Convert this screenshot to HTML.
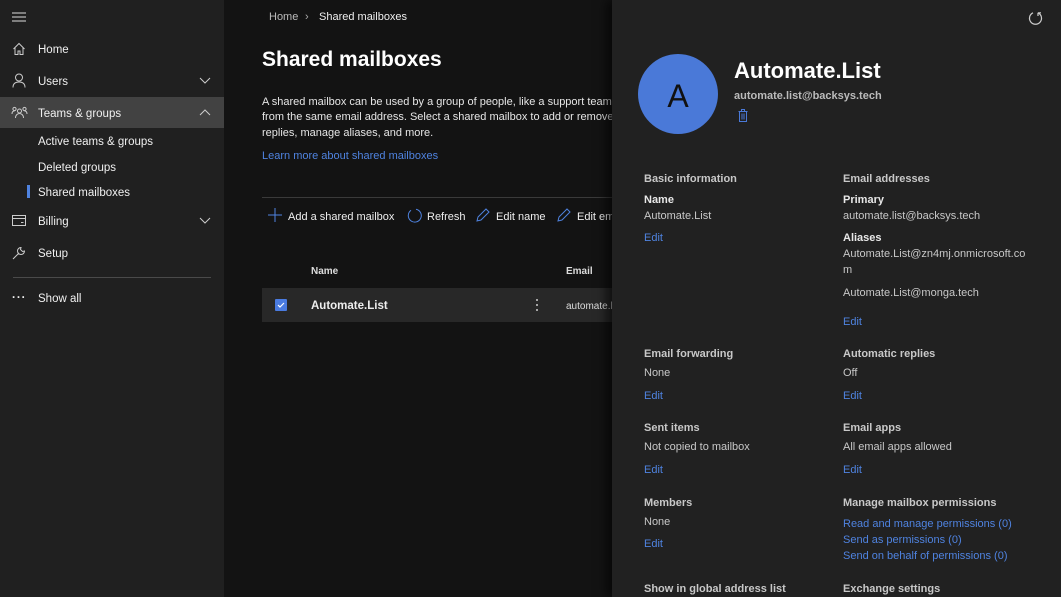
<!DOCTYPE html>
<html><head><meta charset="utf-8"><style>
*{margin:0;padding:0;box-sizing:border-box}
body{width:1061px;height:597px;overflow:hidden;background:#131313;font-family:"Segoe UI","Liberation Sans",sans-serif;color:#e6e6e6;font-size:11px;position:relative}
.a{position:absolute;white-space:nowrap;line-height:16px;margin-top:1px}
#side{position:absolute;left:0;top:0;width:224px;height:597px;background:#202020}
#panel{position:absolute;left:612px;top:0;width:449px;height:597px;background:#212121;box-shadow:-6px 0 10px rgba(0,0,0,.6)}
.nav{font-size:11.5px;color:#f0f0f0}
.h{font-weight:bold;color:#c8c8c8;font-size:11px}
.l{font-weight:bold;color:#e8e8e8;font-size:11px}
.v{color:#c8c8c8;font-size:11px}
.e{color:#4f83e0;font-size:11px}
svg{position:absolute}
</style></head><body>
<div id="side">
<svg style="left:12px;top:12px" width="14" height="10" viewBox="0 0 14 10"><path d="M0 1h14M0 5h14M0 9h14" stroke="#ddd" stroke-width="1"/></svg>
<svg style="left:12px;top:42px" width="14" height="14" viewBox="0 0 14 14" fill="none" stroke="#ccc" stroke-width="1"><path d="M1.5 7L7 1.5L12.5 7M3 5.5V12.5H6V9H8V12.5H11V5.5"/></svg>
<div class="a nav" style="left:38px;top:41px">Home</div>
<svg style="left:12px;top:73px" width="14" height="15" viewBox="0 0 14 15" fill="none" stroke="#ccc" stroke-width="1"><circle cx="7" cy="4.5" r="3.5"/><path d="M1 14.5C1 10.5 3.5 9 7 9S13 10.5 13 14.5"/></svg>
<div class="a nav" style="left:38px;top:73px">Users</div>
<svg style="left:199px;top:77px" width="12" height="7" viewBox="0 0 12 7" fill="none" stroke="#ccc"><path d="M1 1l5 5 5-5"/></svg>
<div style="position:absolute;left:0;top:97px;width:224px;height:31px;background:#424242"></div>
<svg style="left:11px;top:106px" width="17" height="13" viewBox="0 0 17 13" fill="none" stroke="#ccc" stroke-width="1"><circle cx="3.5" cy="3" r="1.6"/><circle cx="13.5" cy="3" r="1.6"/><circle cx="8.5" cy="5" r="2"/><path d="M1 8c0-2 1-3 2.5-3M16 8c0-2-1-3-2.5-3M4.5 12c0-3 2-4.5 4-4.5s4 1.5 4 4.5"/></svg>
<div class="a nav" style="left:38px;top:105px">Teams &amp; groups</div>
<svg style="left:199px;top:109px" width="12" height="7" viewBox="0 0 12 7" fill="none" stroke="#ccc"><path d="M1 6l5-5 5 5"/></svg>
<div class="a nav" style="left:38px;top:133px">Active teams &amp; groups</div>
<div class="a nav" style="left:38px;top:159px">Deleted groups</div>
<div style="position:absolute;left:27px;top:185px;width:3px;height:13px;background:#4f83e0"></div>
<div class="a nav" style="left:38px;top:184px">Shared mailboxes</div>
<svg style="left:12px;top:215px" width="14" height="11" viewBox="0 0 14 11" fill="none" stroke="#ccc"><rect x=".5" y=".5" width="13" height="10"/><path d="M.5 3.5h13M9 7.5h2.5"/></svg>
<div class="a nav" style="left:38px;top:213px">Billing</div>
<svg style="left:199px;top:217px" width="12" height="7" viewBox="0 0 12 7" fill="none" stroke="#ccc"><path d="M1 1l5 5 5-5"/></svg>
<svg style="left:12px;top:246px" width="14" height="14" viewBox="0 0 14 14" fill="none" stroke="#ccc"><path d="M1 13l6-6M9 1.5a3.5 3.5 0 1 0 3.5 3.5L10.5 5.5 8.5 3.5z"/></svg>
<div class="a nav" style="left:38px;top:245px">Setup</div>
<div style="position:absolute;left:13px;top:277px;width:198px;height:1px;background:#4a4a4a"></div>
<div class="a nav" style="left:12px;top:289px;letter-spacing:1px;font-weight:bold">···</div>
<div class="a nav" style="left:38px;top:290px">Show all</div>
</div>

<div class="a" style="left:269px;top:8px;color:#bbb">Home</div>
<div class="a" style="left:305px;top:8px;color:#aaa">›</div>
<div class="a" style="left:319px;top:8px;color:#eee">Shared mailboxes</div>
<div class="a" style="left:262px;top:45px;font-size:21px;font-weight:bold;color:#fff;line-height:28px">Shared mailboxes</div>
<div class="a" style="left:262px;top:94px;color:#e6e6e6;line-height:15.3px;white-space:normal;width:360px">A shared mailbox can be used by a group of people, like a support team, from the same email address. Select a shared mailbox to add or remove replies, manage aliases, and more.</div>
<div class="a e" style="left:262px;top:147px">Learn more about shared mailboxes</div>
<div style="position:absolute;left:262px;top:197px;width:350px;height:1px;background:#3a3a3a"></div>
<svg style="left:268px;top:208px" width="14" height="14" viewBox="0 0 14 14" stroke="#4f83e0"><path d="M7 0v14M0 7h14"/></svg>
<div class="a" style="left:288px;top:208px;color:#eee">Add a shared mailbox</div>
<svg style="left:407px;top:208px" width="15" height="15" viewBox="0 0 15 15" fill="none" stroke="#4f83e0"><path d="M9 1.2A6.5 6.5 0 1 1 4 2.3"/></svg>
<div class="a" style="left:427px;top:208px;color:#eee">Refresh</div>
<svg style="left:476px;top:208px" width="14" height="14" viewBox="0 0 14 14" fill="none" stroke="#4f83e0"><path d="M1 13l1-4 8-8 3 3-8 8z"/></svg>
<div class="a" style="left:496px;top:208px;color:#eee">Edit name</div>
<svg style="left:557px;top:208px" width="14" height="14" viewBox="0 0 14 14" fill="none" stroke="#4f83e0"><path d="M1 13l1-4 8-8 3 3-8 8z"/></svg>
<div class="a" style="left:577px;top:208px;color:#eee">Edit em</div>
<div class="a" style="left:311px;top:263px;font-size:10px;color:#ddd;font-weight:bold">Name</div>
<div class="a" style="left:566px;top:263px;font-size:10px;color:#ddd;font-weight:bold">Email</div>
<div style="position:absolute;left:262px;top:288px;width:350px;height:34px;background:#282828"></div>
<div style="position:absolute;left:275px;top:299px;width:12px;height:12px;background:#4a7be0;border-radius:1px"></div>
<svg style="left:277px;top:301px" width="8" height="8" viewBox="0 0 8 8" fill="none" stroke="#fff" stroke-width="1.2"><path d="M1 4l2 2 4-4"/></svg>
<div class="a" style="left:311px;top:297px;font-size:11.5px;color:#eee;font-weight:bold">Automate.List</div>
<svg style="left:535px;top:298px" width="4" height="14" viewBox="0 0 4 14" fill="#ccc"><circle cx="2" cy="2" r="1"/><circle cx="2" cy="7" r="1"/><circle cx="2" cy="12" r="1"/></svg>
<div class="a" style="left:566px;top:298px;font-size:10px;color:#ddd">automate.l</div>

<div id="panel">
<svg style="left:416px;top:11px" width="15" height="15" viewBox="0 0 15 15" fill="none" stroke="#ccc" stroke-width="1.2"><path d="M10 1.8A6 6 0 1 1 5 1.8M10 1.8V5M10 1.8H13"/></svg>
<div style="position:absolute;left:26px;top:54px;width:80px;height:80px;border-radius:50%;background:#4a79d8"></div>
<div class="a" style="left:26px;top:78px;width:80px;text-align:center;font-size:32px;line-height:34px;color:#111">A</div>
<div class="a" style="left:122px;top:56px;font-size:22px;line-height:28px;font-weight:bold;color:#fff">Automate.List</div>
<div class="a" style="left:122px;top:87px;font-size:11px;color:#bbb;font-weight:bold">automate.list@backsys.tech</div>
<svg style="left:126px;top:109px" width="10" height="13" viewBox="0 0 10 13" fill="none" stroke="#4a79d8"><path d="M.5 2.5h9M3.5 2.5V.5h3v2M1.5 2.5v10h7v-10M4 4.5v6M6 4.5v6"/></svg>

<div class="a h" style="left:32px;top:170px">Basic information</div>
<div class="a l" style="left:32px;top:191px">Name</div>
<div class="a v" style="left:32px;top:207px">Automate.List</div>
<div class="a e" style="left:32px;top:229px">Edit</div>
<div class="a h" style="left:231px;top:170px">Email addresses</div>
<div class="a l" style="left:231px;top:191px">Primary</div>
<div class="a v" style="left:231px;top:207px">automate.list@backsys.tech</div>
<div class="a l" style="left:231px;top:229px">Aliases</div>
<div class="a v" style="left:231px;top:245px">Automate.List@zn4mj.onmicrosoft.co</div>
<div class="a v" style="left:231px;top:261px">m</div>
<div class="a v" style="left:231px;top:284px">Automate.List@monga.tech</div>
<div class="a e" style="left:231px;top:313px">Edit</div>

<div class="a h" style="left:32px;top:345px">Email forwarding</div>
<div class="a v" style="left:32px;top:364px">None</div>
<div class="a e" style="left:32px;top:387px">Edit</div>
<div class="a h" style="left:231px;top:345px">Automatic replies</div>
<div class="a v" style="left:231px;top:364px">Off</div>
<div class="a e" style="left:231px;top:387px">Edit</div>

<div class="a h" style="left:32px;top:419px">Sent items</div>
<div class="a v" style="left:32px;top:438px">Not copied to mailbox</div>
<div class="a e" style="left:32px;top:461px">Edit</div>
<div class="a h" style="left:231px;top:419px">Email apps</div>
<div class="a v" style="left:231px;top:438px">All email apps allowed</div>
<div class="a e" style="left:231px;top:461px">Edit</div>

<div class="a h" style="left:32px;top:494px">Members</div>
<div class="a v" style="left:32px;top:513px">None</div>
<div class="a e" style="left:32px;top:535px">Edit</div>
<div class="a h" style="left:231px;top:494px">Manage mailbox permissions</div>
<div class="a e" style="left:231px;top:515px">Read and manage permissions (0)</div>
<div class="a e" style="left:231px;top:531px">Send as permissions (0)</div>
<div class="a e" style="left:231px;top:547px">Send on behalf of permissions (0)</div>

<div class="a h" style="left:32px;top:580px">Show in global address list</div>
<div class="a h" style="left:231px;top:580px">Exchange settings</div>
</div>
</body></html>
